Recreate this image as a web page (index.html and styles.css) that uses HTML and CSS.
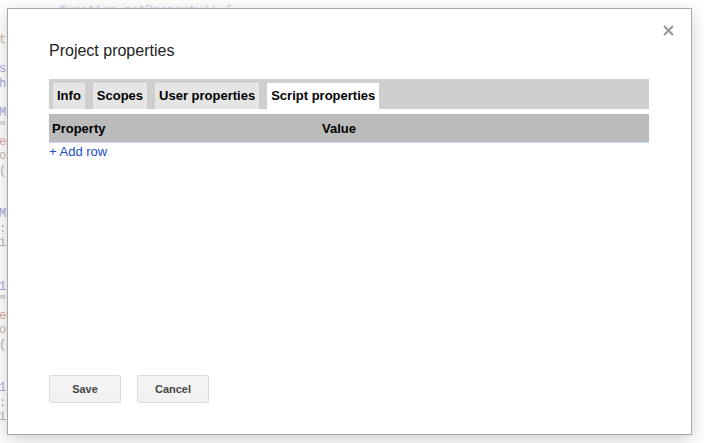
FILE: index.html
```html
<!DOCTYPE html>
<html>
<head>
<meta charset="utf-8">
<link rel="stylesheet" href="styles.css">
</head>
<body>
<div class="code">
  <div class="ln"><span class="c-top">function getProperty() {</span></div>
  <div class="ln">&nbsp;</div>
  <div class="ln"><span class="c-br">this</span></div>
  <div class="ln">&nbsp;</div>
  <div class="ln"><span class="c-bl">script</span></div>
  <div class="ln"><span class="c-bl">https</span></div>
  <div class="ln">&nbsp;</div>
  <div class="ln"><span class="c-pu">MailApp</span></div>
  <div class="ln"><span class="c-gr">"body"</span></div>
  <div class="ln"><span class="c-re">email</span></div>
  <div class="ln"><span class="c-br">obj</span></div>
  <div class="ln"><span class="c-gr">(x)</span></div>
  <div class="ln">&nbsp;</div>
  <div class="ln">&nbsp;</div>
  <div class="ln"><span class="c-pu">Main</span></div>
  <div class="ln"><span class="c-gr">::</span></div>
  <div class="ln"><span class="c-gr">i</span></div>
  <div class="ln">&nbsp;</div>
  <div class="ln">&nbsp;</div>
  <div class="ln"><span class="c-bl">1</span></div>
  <div class="ln"><span class="c-gr">"x"</span></div>
  <div class="ln"><span class="c-re">email</span></div>
  <div class="ln"><span class="c-br">obj</span></div>
  <div class="ln"><span class="c-gr">(x)</span></div>
  <div class="ln">&nbsp;</div>
  <div class="ln">&nbsp;</div>
  <div class="ln"><span class="c-bl">1</span></div>
  <div class="ln"><span class="c-gr">:</span></div>
  <div class="ln"><span class="c-gr">i</span></div>
</div>

<div class="dialog">
  <button class="close" aria-label="Close">
    <svg width="11" height="11" viewBox="0 0 11 11"><path d="M1 1 L10 10 M10 1 L1 10" stroke="#9a9a9a" stroke-width="2.2" fill="none"/></svg>
  </button>
  <div class="title">Project properties</div>
  <div class="tabbar">
    <div class="tab">Info</div>
    <div class="tab">Scopes</div>
    <div class="tab">User properties</div>
    <div class="tab active">Script properties</div>
  </div>
  <div class="thead">
    <div class="col-prop">Property</div>
    <div class="col-val">Value</div>
  </div>
  <a class="addrow" href="#">+ Add row</a>
  <div class="buttons">
    <button class="btn">Save</button>
    <button class="btn">Cancel</button>
  </div>
</div>
</body>
</html>
```

FILE: styles.css
```css
html, body {
  margin: 0;
  padding: 0;
  width: 704px;
  height: 443px;
  overflow: hidden;
  background: #fff;
  font-family: "Liberation Sans", Arial, sans-serif;
}

.code {
  height: 443px;
  overflow: hidden;
  box-sizing: border-box;
  padding-top: 4px;
  margin-left: -1px;
  font-family: "Liberation Mono", monospace;
  font-size: 12px;
  line-height: 14.5px;
}
.ln { height: 14.5px; white-space: nowrap; }
.c-top { color: #d4d4ec; padding-left: 60px; }
.c-br { color: #c8b8a8; }
.c-bl { color: #a9a9df; }
.c-pu { color: #a8a8d8; }
.c-gr { color: #b5b5b5; }
.c-re { color: #d9aaa0; }

.dialog {
  position: absolute;
  left: 7px;
  top: 8px;
  width: 685px;
  height: 427px;
  box-sizing: border-box;
  background: #fff;
  border: 1px solid #a6a6a6;
  box-shadow: 0 4px 16px rgba(0, 0, 0, 0.2);
  padding: 33px 42px 31px 41px;
  display: flex;
  flex-direction: column;
}

.close {
  position: absolute;
  right: 17px;
  top: 16px;
  width: 11px;
  height: 11px;
  padding: 0;
  border: 0;
  background: transparent;
  display: block;
}
.close svg { display: block; }

.title {
  font-size: 16px;
  line-height: 18px;
  color: #222;
  margin: 0 0 19px 0;
}

.tabbar {
  background: #cfcfcf;
  height: 30px;
  box-sizing: border-box;
  padding: 4px 4px 0 4px;
  display: flex;
  gap: 8px;
}

.tab {
  background: #e5e5e5;
  height: 26px;
  line-height: 26px;
  padding: 0 4px;
  font-size: 13px;
  font-weight: bold;
  color: #000;
}
.tab.active { background: #fff; }

.thead {
  margin-top: 5px;
  height: 28px;
  background: #bbbbbb;
  border-bottom: 1px solid #c4d8f0;
  display: flex;
  align-items: center;
  font-size: 13px;
  font-weight: bold;
  color: #000;
}
.col-prop {
  width: 270px;
  padding-left: 3px;
}

.addrow {
  align-self: flex-start;
  font-size: 13px;
  line-height: 17px;
  color: #1a4fcc;
  text-decoration: none;
}

.buttons {
  margin-top: auto;
  display: flex;
  gap: 16px;
}

.btn {
  width: 72px;
  height: 28px;
  box-sizing: border-box;
  border: 1px solid #dcdcdc;
  border-radius: 2px;
  background: linear-gradient(#f5f5f5, #f1f1f1);
  color: #444;
  font-family: "Liberation Sans", Arial, sans-serif;
  font-size: 11px;
  font-weight: bold;
  padding: 0;
}
```
